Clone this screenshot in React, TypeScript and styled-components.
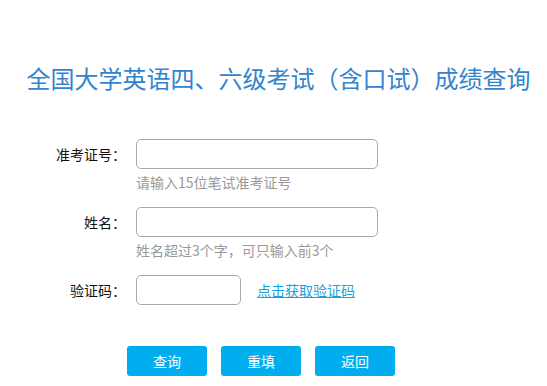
import React from "react";
import styled, { createGlobalStyle } from "styled-components";

const GlobalStyle = createGlobalStyle`
  body {
    margin: 0;
    background: #fff;
    font-family: "Microsoft YaHei", "Noto Sans CJK SC", "Liberation Sans", sans-serif;
  }
`;

const Page = styled.div`
  width: 547px;
  height: 386px;
  overflow: hidden;
  padding-top: 63px;
  box-sizing: border-box;
`;

const Title = styled.h1`
  margin: 0;
  padding-left: 10px;
  font-size: 24px;
  line-height: 30px;
  font-weight: normal;
  color: #3384cc;
  text-align: center;
  white-space: nowrap;
`;

const Form = styled.div`
  margin-top: 46px;
  display: flex;
  flex-direction: column;
  gap: 15px;
`;

const Field = styled.div`
  display: flex;
  flex-direction: column;
`;

const FieldLine = styled.div`
  display: flex;
  align-items: center;
  gap: 10px;
`;

const Label = styled.label`
  width: 126px;
  text-align: right;
  font-size: 14px;
  color: #111;
`;

const Input = styled.input<{ $width: number }>`
  width: ${(p) => p.$width}px;
  height: 30px;
  box-sizing: border-box;
  border: 1px solid #a9a9a9;
  border-radius: 5px;
  padding: 0 8px;
  font-size: 14px;
  outline: none;
`;

const Hint = styled.div`
  margin: 3px 0 0 136px;
  font-size: 14px;
  line-height: 20px;
  color: #999;
`;

const Link = styled.a`
  margin-left: 6px;
  font-size: 14px;
  color: #1a9fe0;
  text-decoration: underline;
  cursor: pointer;
`;

const Buttons = styled.div`
  margin-top: 41px;
  padding-left: 127px;
  display: flex;
  gap: 14px;
`;

const Button = styled.button`
  width: 80px;
  height: 30px;
  border: none;
  border-radius: 3px;
  background: #00aeef;
  color: #fff;
  font-family: inherit;
  font-size: 14px;
  cursor: pointer;
`;

const App: React.FC = () => {
  return (
    <Page>
      <GlobalStyle />
      <Title>全国大学英语四、六级考试（含口试）成绩查询</Title>
      <Form>
        <Field>
          <FieldLine>
            <Label>准考证号：</Label>
            <Input $width={242} />
          </FieldLine>
          <Hint>请输入15位笔试准考证号</Hint>
        </Field>
        <Field>
          <FieldLine>
            <Label>姓名：</Label>
            <Input $width={242} />
          </FieldLine>
          <Hint>姓名超过3个字，可只输入前3个</Hint>
        </Field>
        <Field>
          <FieldLine>
            <Label>验证码：</Label>
            <Input $width={105} />
            <Link>点击获取验证码</Link>
          </FieldLine>
        </Field>
      </Form>
      <Buttons>
        <Button>查询</Button>
        <Button>重填</Button>
        <Button>返回</Button>
      </Buttons>
    </Page>
  );
};

export default App;
